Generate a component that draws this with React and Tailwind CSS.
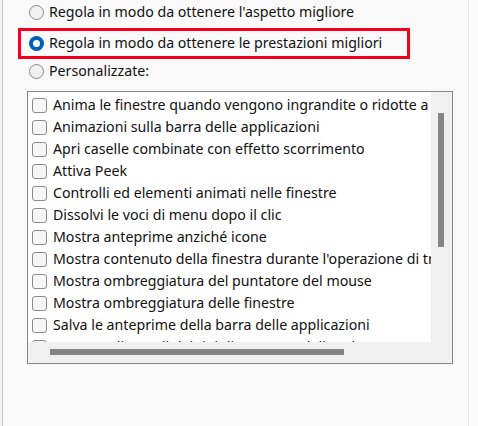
const items = [
  "Anima le finestre quando vengono ingrandite o ridotte a icona",
  "Animazioni sulla barra delle applicazioni",
  "Apri caselle combinate con effetto scorrimento",
  "Attiva Peek",
  "Controlli ed elementi animati nelle finestre",
  "Dissolvi le voci di menu dopo il clic",
  "Mostra anteprime anziché icone",
  "Mostra contenuto della finestra durante l'operazione di trascinamento",
  "Mostra ombreggiatura del puntatore del mouse",
  "Mostra ombreggiatura delle finestre",
  "Salva le anteprime della barra delle applicazioni",
  "Smussa gli angoli dei tipi di carattere dello schermo",
];

function Radio({ checked }) {
  if (checked) {
    return (
      <span className="w-[15px] h-[15px] rounded-full bg-[#005fb8] flex items-center justify-center shrink-0">
        <span className="w-[7px] h-[7px] rounded-full bg-white" />
      </span>
    );
  }
  return (
    <span className="w-[15px] h-[15px] rounded-full border border-[#8a8a8a] bg-[#f0f0f0] shrink-0" />
  );
}

export default function App() {
  return (
    <div className="w-[478px] h-[426px] bg-[#f9f9f9] flex overflow-hidden text-[14.2px] text-[#111] font-['Noto_Sans',sans-serif]">
      <div className="w-[2px] bg-[#f3f3f3]" />
      <div className="w-px bg-[#c8c8c8]" />
      <div className="w-[465px] flex flex-col">
        <div className="h-[25px] flex items-center gap-[5px] pl-[26px]">
          <Radio />
          <span className="leading-none">Regola in modo da ottenere l'aspetto migliore</span>
        </div>
        <div className="mt-[3px] ml-[15px] w-[392px] h-[31px] border-[3px] border-[#f2001d] flex items-center gap-[5px] pl-[8px]">
          <Radio checked />
          <span className="leading-none">Regola in modo da ottenere le prestazioni migliori</span>
        </div>
        <div className="h-[25px] flex items-center gap-[5px] pl-[26px]">
          <Radio />
          <span className="leading-none">Personalizzate:</span>
        </div>
        <div className="mt-[7px] ml-[24px] w-[426px] h-[273px] border border-[#868686] bg-[#f0f0f0] grid grid-cols-[403px_21px] grid-rows-[250px_21px]">
          <div className="bg-white overflow-hidden pt-[2px] pl-[4px]">
            {items.map((t) => (
              <div key={t} className="h-[22px] flex items-center gap-[6px] whitespace-nowrap">
                <span className="w-[15px] h-[15px] rounded-[3px] border border-[#8a8a8a] bg-[#f6f6f6] shrink-0" />
                <span className="leading-none">{t}</span>
              </div>
            ))}
          </div>
          <div className="pt-[21px] pl-[7px]">
            <div className="w-[6px] h-[134px] bg-[#858585]" />
          </div>
          <div className="pt-[7px] pl-[22px]">
            <div className="w-[294px] h-[6px] bg-[#858585]" />
          </div>
          <div />
        </div>
      </div>
      <div className="w-px bg-[#e6e6e6]" />
      <div className="flex-1 bg-[#fbfbfb]" />
    </div>
  );
}
